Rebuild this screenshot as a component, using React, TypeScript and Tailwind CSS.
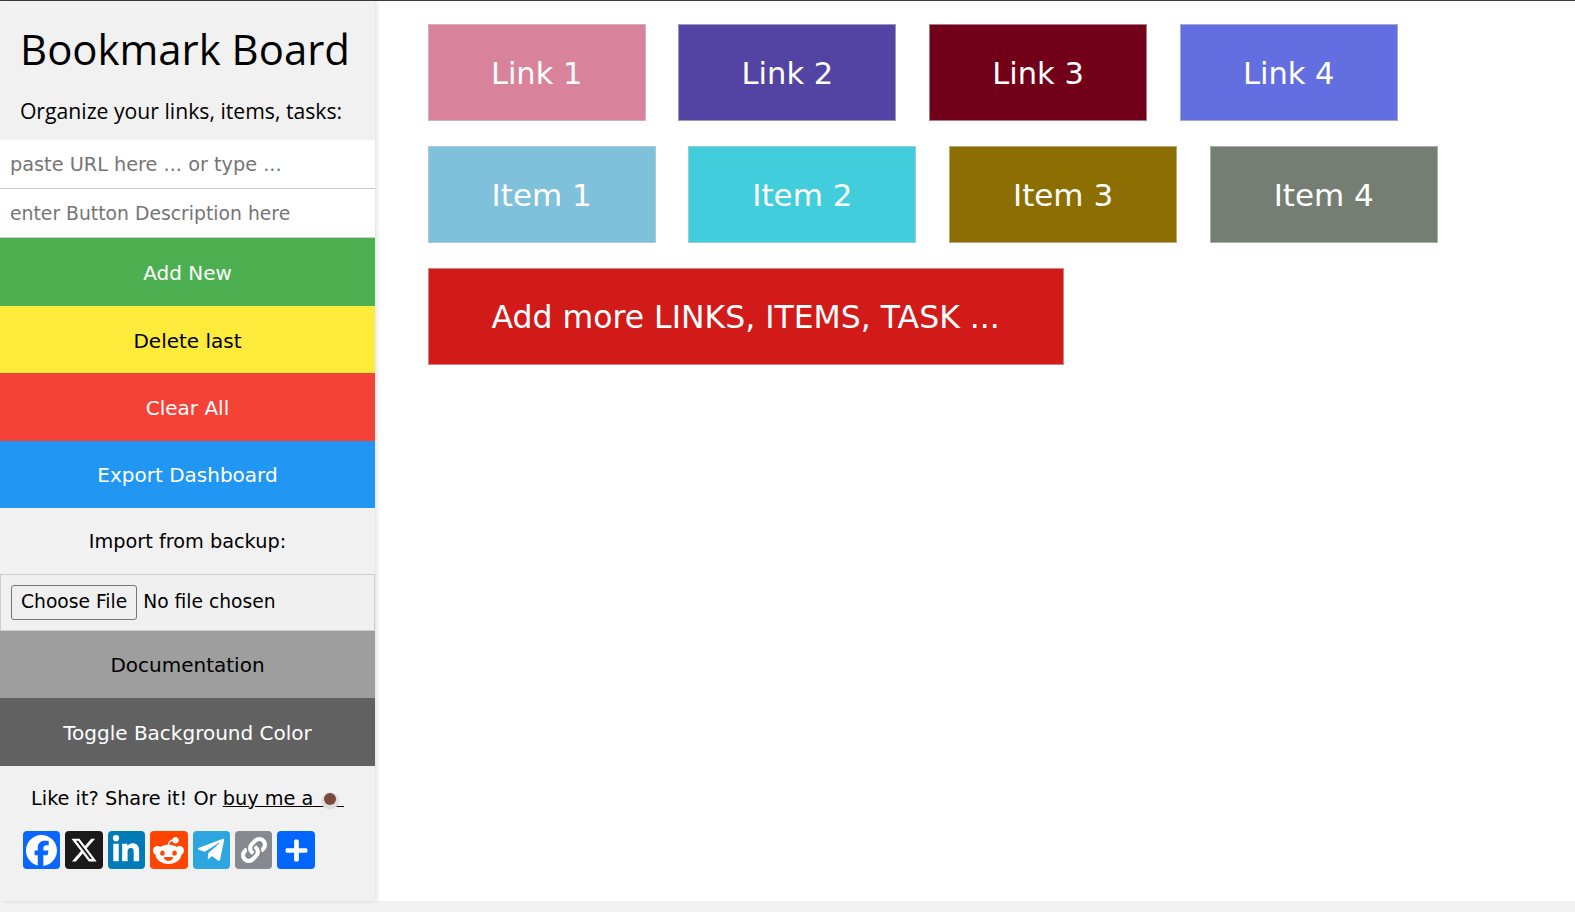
import { FaFacebook, FaLinkedinIn, FaRedditAlien, FaXTwitter } from "react-icons/fa6";
import { FaTelegramPlane, FaLink, FaPlus } from "react-icons/fa";

const SIDE_BODY = "[font-family:'DejaVu_Sans',Verdana,sans-serif]";

const LINKS = [
  { label: "Link 1", cls: "bg-[#d9829b]" },
  { label: "Link 2", cls: "bg-[#5344a4]" },
  { label: "Link 3", cls: "bg-[#730019]" },
  { label: "Link 4", cls: "bg-[#636fe0]" },
];

const ITEMS = [
  { label: "Item 1", cls: "bg-[#7fc0db]" },
  { label: "Item 2", cls: "bg-[#42cddc]" },
  { label: "Item 3", cls: "bg-[#8d6e02]" },
  { label: "Item 4", cls: "bg-[#757e72]" },
];

const SHARE = [
  { Icon: FaFacebook, cls: "bg-[#0a66ff] text-[31px]" },
  { Icon: FaXTwitter, cls: "bg-[#1a1a1a] text-[28px]" },
  { Icon: FaLinkedinIn, cls: "bg-[#007bb5] text-[30px]" },
  { Icon: FaRedditAlien, cls: "bg-[#ff4500] text-[31px]" },
  { Icon: FaTelegramPlane, cls: "bg-[#2ca5e0] text-[30px]" },
  { Icon: FaLink, cls: "bg-[#888990] text-[26px]" },
  { Icon: FaPlus, cls: "bg-[#0166ff] text-[25px]" },
];

function SideButton({ label, cls }: { label: string; cls: string }) {
  return (
    <button className={`flex w-full items-center justify-center text-[20px] ${cls}`}>
      {label}
    </button>
  );
}

export default function App() {
  return (
    <div className={`relative h-[912px] overflow-hidden bg-[#f1f1f1] text-black ${SIDE_BODY}`}>
      <div className="h-px bg-[#3a3a3a]" />
      <div className="flex h-[900px]">
        <aside className="relative z-10 flex w-[375px] shrink-0 flex-col bg-[#f1f1f1] shadow-[2px_0_4px_rgba(0,0,0,0.12)]">
          <h1 className="mt-[19px] pr-[5px] text-center font-['Open_Sans',sans-serif] text-[41.9px] leading-[58px] font-normal">
            Bookmark Board
          </h1>
          <p className="mt-[17px] h-[45px] pr-[13px] text-center font-['Open_Sans',sans-serif] text-[21.2px] leading-[32px]">
            Organize your links, items, tasks:
          </p>
          <input
            placeholder="paste URL here ... or type ..."
            className="h-[49px] w-[375px] border-b border-[#cccccc] bg-white px-[10px] text-[19.3px] outline-none placeholder:text-[#757575]"
          />
          <input
            placeholder="enter Button Description here"
            className="h-[49px] w-[375px] border-b border-[#cccccc] bg-white px-[10px] text-[18.8px] outline-none placeholder:text-[#757575]"
          />
          <div className="flex w-[375px] flex-col">
            <SideButton label="Add New" cls="h-[68px] pt-[2px] bg-[#4caf50] text-white" />
            <SideButton label="Delete last" cls="h-[67px] pt-[2px] bg-[#ffeb3b] text-black" />
            <SideButton label="Clear All" cls="h-[68px] pt-[2px] bg-[#f44336] text-white" />
            <SideButton label="Export Dashboard" cls="h-[67px] bg-[#2196f3] text-white" />
            <div className="flex h-[66px] items-center justify-center pt-[2px] text-[19.3px]">Import from backup:</div>
            <div className="flex h-[57px] items-center border border-[#cccccc] bg-[#f0f0f0] pl-[10px]">
              <input
                type="file"
                className="w-[300px] text-[18.7px] file:mr-[6px] file:h-[35px] file:rounded-[3px] file:border file:border-[#767676] file:bg-[#efefef] file:px-[9px]"
              />
            </div>
            <SideButton label="Documentation" cls="h-[67px] bg-[#9e9e9e] text-black" />
            <SideButton label="Toggle Background Color" cls="h-[68px] pt-[2px] bg-[#616161] text-white" />
          </div>
          <p className="mt-[19px] h-[27px] text-center text-[19.3px] leading-[27px]">
            Like it? Share it! Or{" "}
            <a className="relative underline">
              buy me a{"\u00a0\u00a0\u00a0\u00a0\u00a0"}
              <svg viewBox="0 0 20 20" className="absolute top-[3px] right-[4px] h-[20px] w-[20px]">
                <ellipse cx="10" cy="11" rx="9" ry="8.5" fill="#dedede" />
                <circle cx="10" cy="9" r="6" fill="#7a4a3a" />
              </svg>
            </a>
          </p>
          <div className="mt-[19px] flex gap-[5px] pl-[23px]">
            {SHARE.map(({ Icon, cls }, i) => (
              <span key={i} className={`flex h-[38px] w-[37.4px] items-center justify-center rounded-[4px] text-white ${cls}`}>
                <Icon />
              </span>
            ))}
          </div>
        </aside>

        <main className="flex-1 bg-white pt-[23px] pl-[52.7px]">
          <div className="flex gap-x-[32.7px]">
            {LINKS.map((b) => (
              <button key={b.label} className={`h-[97px] w-[218px] border border-[#cfcfcf]/60 pt-[2px] text-[30.5px] text-white ${b.cls}`}>
                {b.label}
              </button>
            ))}
          </div>
          <div className="mt-[25px] flex gap-x-[32.7px]">
            {ITEMS.map((b) => (
              <button key={b.label} className={`h-[97px] w-[228px] border border-[#cfcfcf]/60 pt-[2px] text-[31px] text-white ${b.cls}`}>
                {b.label}
              </button>
            ))}
          </div>
          <button className="mt-[25px] h-[97px] w-[636px] border border-[#cfcfcf]/60 bg-[#d21a19] pt-[2px] text-[31.5px] text-white">
            Add more LINKS, ITEMS, TASK ...
          </button>
        </main>
      </div>

      <svg viewBox="0 0 14 22" className="absolute top-[1px] left-[5px] h-[21px] w-[13px]">
        <path d="M1 1 V16 L4.6 12.8 L7.2 19 L9.6 18 L7 12 H12 Z" fill="#ffffff" stroke="#222222" strokeWidth="1" />
      </svg>
    </div>
  );
}
